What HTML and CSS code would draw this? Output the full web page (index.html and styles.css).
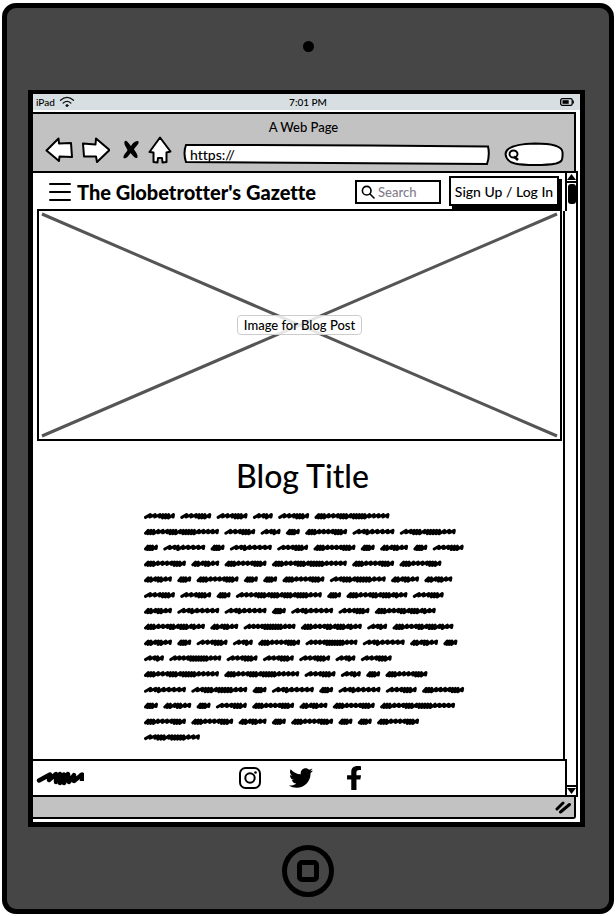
FILE: index.html
```html
<!DOCTYPE html>
<html lang="en">
<head>
<meta charset="utf-8">
<title>The Globetrotter's Gazette</title>
<link rel="stylesheet" href="styles.css">
</head>
<body>
<div class="device">
  <div class="bezel"><span class="camera"></span></div>
  <div class="screen">
    <div class="status">
      <span class="carrier">iPad
        <svg width="16" height="12" viewBox="0 0 16 12" fill="none" stroke="#111" stroke-width="1.3" stroke-linecap="round"><path d="M1.500 4.300Q8-1.500 14.500 4.300M4.200 7Q8 3.800 11.800 7"/><circle cx="8" cy="9.600" r="1" fill="#111" stroke-width="1"/></svg>
      </span>
      <span class="clock">7:01 PM</span>
      <svg class="battery" width="14" height="8" viewBox="0 0 14 8"><rect x=".7" y=".7" width="11.500" height="6.600" rx="1.600" fill="#d7dfe3" stroke="#000" stroke-width="1.300"/><path d="M13.300 2.500v3" stroke="#000" stroke-width="1.200"/><path d="M2.500 2.200h6.200v3.600H2.500z"/></svg>
    </div>
    <header class="chrome">
      <div class="page-name">A Web Page</div>
      <div class="tools">
        <button class="tool" aria-label="Back"><svg width="28" height="26" viewBox="0 0 28 26"><path d="M1.500 13.500 13.500 1.500 14 6.500 26 6 27 20 14.500 19.500 14 24Z"/></svg></button>
        <button class="tool" aria-label="Forward"><svg width="28" height="26" viewBox="0 0 28 26"><path d="M1 6.500 13.500 7.500 14 1.500 27.500 13 15 25 14 19.500 2 19.500Z"/></svg></button>
        <button class="tool tool-stop" aria-label="Stop"><svg width="18" height="20" viewBox="0 0 18 20"><path d="M3 1C5 0 7 4 9 6C11 3 14 0 16.500 1.500C17.500 4 13 7 12 9.500C14 12 16 15 15.500 17.500C13 19.500 10.500 15 8.500 13C7 15.500 4 19.500 1.500 18C1 15 4.500 12.500 5.500 10C4 7 1 3 3 1Z" fill="#000" stroke="none"/></svg></button>
        <button class="tool tool-home" aria-label="Home"><svg width="24" height="28" viewBox="0 0 24 28"><path d="M12 1.500 22.500 15.500 18.500 16.500 18.500 26 14.500 26.500 14 22 10 22 9.500 26.500 5.500 26 5.500 16.500 1.500 16Z"/></svg></button>
        <label class="address">
          <svg class="frame" viewBox="0 0 307 22" preserveAspectRatio="none"><path d="M3 2 Q150 2 305 3.500 Q307 12 304 21 Q150 20 3 19 Q0 10 3 2Z"/></svg>
          <input type="text" value="https://" aria-label="Address">
        </label>
        <label class="find">
          <svg class="frame" viewBox="0 0 60 24" preserveAspectRatio="none"><path d="M1.500 12C2 6 10 2 31 1.500C50 1.500 58 5 58.500 10C59 18 58 20 52 21.500C42 23.500 20 23.500 11 21.500C5 20 2 17 1.500 12Z"/></svg>
          <svg class="lens" width="12" height="12" viewBox="0 0 12 12" fill="none" stroke="#000" stroke-width="2"><ellipse cx="5.500" cy="5" rx="4" ry="3.600"/><path d="M6 7.500 10 11" stroke-width="2.600"/></svg>
          <input type="text" aria-label="Web search">
        </label>
      </div>
    </header>
    <div class="viewport">
      <div class="page">
        <nav class="site-bar">
          <button class="menu" aria-label="Menu"><svg width="22" height="18" viewBox="0 0 22 18" stroke="#000" stroke-width="2" stroke-linecap="round"><path d="M1 1h20M1 9h20M1 17h20"/></svg></button>
          <h1>The Globetrotter's Gazette</h1>
          <label class="search">
            <svg width="14" height="14" viewBox="0 0 14 14" fill="none" stroke="#000" stroke-width="1.600" stroke-linecap="round"><circle cx="5.700" cy="5.700" r="4.300"/><path d="M9 9l4 4"/></svg>
            <input type="search" placeholder="Search" aria-label="Search">
          </label>
          <button class="sign">Sign Up / Log In</button>
        </nav>
        <main>
          <figure>
            <svg viewBox="0 0 521 228" preserveAspectRatio="none" stroke="#555" stroke-width="3"><path d="M3 3 518 225M518 3 3 225"/></svg>
            <figcaption>Image for Blog Post</figcaption>
          </figure>
          <article>
            <h2>Blog Title</h2>
            <svg class="scribble" id="scribble" viewBox="0 0 318 230" role="img" aria-label="Blog text"></svg>
          </article>
        </main>
        <footer>
          <svg class="mark" width="48" height="16" viewBox="0 0 48 16" fill="none" stroke="#000" stroke-width="4.400" stroke-linecap="round" stroke-linejoin="round"><path d="M3 10.500 14 4.500 13 10 20 4 20 12 24 4 24 13 28 4.500 28 13 32 4 33 12 38 5 38 11 46 4.500"/><path d="M46 3v8" stroke-linecap="butt"/></svg>
          <div class="social">
            <a href="#" aria-label="Instagram"><svg width="22" height="22" viewBox="0 0 22 22" fill="none" stroke="#000" stroke-width="2"><rect x="1" y="1" width="20" height="20" rx="5.500"/><circle cx="11" cy="11" r="4.700"/><circle cx="16.500" cy="5.500" r="1.300" fill="#000" stroke="none"/></svg></a>
            <a href="#" aria-label="Twitter"><svg width="24" height="24" viewBox="0 0 512 512"><path d="M459.370 151.716c.325 4.548.325 9.097.325 13.645 0 138.720-105.583 298.558-298.558 298.558-59.452 0-114.680-17.219-161.137-47.106 8.447.974 16.568 1.299 25.340 1.299 49.055 0 94.213-16.568 130.274-44.832-46.132-.975-84.792-31.188-98.112-72.772 6.498.974 12.995 1.624 19.818 1.624 9.421 0 18.843-1.300 27.614-3.573-48.081-9.747-84.143-51.980-84.143-102.985v-1.299c13.969 7.797 30.214 12.670 47.431 13.319-28.264-18.843-46.781-51.005-46.781-87.391 0-19.492 5.197-37.360 14.294-52.954 51.655 63.675 129.300 105.258 216.365 109.807-1.624-7.797-2.599-15.918-2.599-24.040 0-57.828 46.782-104.934 104.934-104.934 30.213 0 57.502 12.670 76.670 33.137 23.715-4.548 46.456-13.320 66.599-25.340-7.798 24.366-24.366 44.833-46.132 57.827 21.117-2.273 41.584-8.122 60.426-16.243-14.292 20.791-32.161 39.308-52.628 54.253z"/></svg></a>
            <a href="#" aria-label="Facebook"><svg width="14" height="24" viewBox="22 0 270 512" preserveAspectRatio="none"><path d="M279.140 288l14.220-92.660h-88.910v-60.130c0-25.350 12.420-50.060 52.240-50.060h40.420V6.260S260.430 0 225.360 0c-73.220 0-121.080 44.380-121.080 124.720v70.620H22.890V288h81.390v224h100.170V288z"/></svg></a>
          </div>
        </footer>
      </div>
      <div class="scrollbar">
        <span class="arrow"><svg width="9" height="6" viewBox="0 0 9 6"><path d="M4.500 0 9 6H0z"/></svg></span>
        <span class="thumb"></span>
        <span class="arrow arrow-down"><svg width="9" height="6" viewBox="0 0 9 6"><path d="M4.500 6 9 0H0z"/></svg></span>
      </div>
    </div>
    <div class="resize"><svg width="18" height="14" viewBox="0 0 18 14" stroke="#000" stroke-width="3" stroke-linecap="round"><path d="M3 9 9 3M6.500 12 15.500 4.500"/></svg></div>
  </div>
  <div class="bezel bezel-home"><button class="home" aria-label="Home button"><span></span></button></div>
</div>
<script src="scribble.js"></script>
</body>
</html>
```
FILE: scribble.js
```js
// Each word is a width and a run of strokes: "w" is a wide stroke, "n" a narrow one.
const words = {
  a: [31, "wwwnnnw"], b: [14, "nnnw"], c: [20, "wwnw"], d: [28, "nnwnnww"],
  e: [42, "nnnwwwwnnnw"], f: [42, "wwnwwwww"], g: [56, "wwnnnwnnnnnwww"],
  h: [75, "nnnwwwnnnwnnnnnwwwww"], i: [86, "wwwwnnnwnnnwnnnwnnnnwww"],
  j: [61, "nnnwwwnnwnnnwnww"], k: [52, "wwwwnnnnnnnwww"]
};
const rows = [
  "aaacah", "hacbefg", "bfbfaebdba", "edehee", "dbebbegdd", "aabibja",
  "dffbfaj", "jdkjcj", "dbacekfdb", "ckaaaca", "hhacbe", "fgbfbfae",
  "bdbaedeh", "eedbebbe", "g"
];

function scribble(x, y, width, strokes) {
  const weight = { w: 5, n: 3 };
  const total = [...strokes].reduce((sum, s) => sum + weight[s], 0);
  const scale = (width - 3) / total;
  let d = `M${x + 1.5} ${y + 1.4}`;
  let px = x + 1.5;
  for (const s of strokes) {
    const step = weight[s] * scale;
    const foot = s === "n" ? 2 : 1;
    d += `L${px + step} ${y - 1.4}L${px + step - 0.4} ${y + foot}`;
    px += step;
  }
  return d;
}

let path = "";
rows.forEach((row, r) => {
  let x = 0;
  for (const key of row) {
    const [width, strokes] = words[key];
    path += scribble(x, 5 + r * 15.8, width, strokes);
    x += width + 5.3;
  }
});
document.getElementById("scribble").innerHTML = `<path d="${path}"/>`;
```
FILE: styles.css
```css
* { box-sizing: border-box; }
body {
  margin: 0;
  min-height: 100vh;
  padding: 3px 2px 2px;
  display: flex;
  background: #fff;
  color: #000;
  font-family: Lato, "Open Sans", sans-serif;
  font-size: 14px;
  font-weight: 500;
  font-variant-ligatures: none;
}
button, input { font: inherit; color: inherit; margin: 0; padding: 0; border: 0; background: none; }
input { min-width: 0; width: 100%; outline: 0; }
svg { display: block; flex: none; }

.device {
  flex: 1;
  display: flex;
  flex-direction: column;
  border: 5px solid #000;
  border-radius: 14px;
  background: #464646;
}
.bezel { height: 82px; display: flex; align-items: center; justify-content: center; }
.bezel-home { padding-top: 6px; }
.camera { width: 11px; height: 11px; margin-bottom: 6px; border-radius: 50%; background: #000; }
.home {
  width: 52px;
  height: 52px;
  display: grid;
  place-items: center;
  border: 5px solid #000;
  border-radius: 50%;
}
.home span { width: 22px; height: 22px; border: 5px solid #000; border-radius: 5px; }

.screen {
  flex: 1;
  display: flex;
  flex-direction: column;
  margin: 0 24px 0 21px;
  border: 5px solid #000;
  border-top-width: 4px;
  background: #fff;
}
.status {
  display: grid;
  grid-template-columns: 1fr auto 1fr;
  align-items: center;
  height: 16px;
  padding: 0 0 0 3px;
  background: #d7dfe3;
  font-size: 10px;
  line-height: 12px;
}
.carrier { display: flex; align-items: center; gap: 4px; }
.battery { justify-self: end; margin-right: 6px; }

.chrome {
  height: 59px;
  margin: 2px 4px 0 0;
  border: solid #000;
  border-width: 2px 2px 0 0;
  background: #c2c2c2;
}
.page-name { padding-top: 4px; text-align: center; font-size: 13px; line-height: 18px; }
.tools { display: flex; align-items: center; height: 28px; padding: 0 10px 0 12px; }
.tool { margin-right: 9px; }
.tool svg { fill: #fff; stroke: #000; stroke-width: 2; stroke-linejoin: round; }
.tool-stop { margin: 0 8px 0 3px; }
.tool-home { margin-right: 11px; }
.address, .find { position: relative; display: flex; align-items: center; margin-top: 8px; }
.address { flex: 1; height: 22px; padding-left: 7px; font-size: 14px; }
.find { width: 60px; height: 24px; margin-left: 14px; padding-left: 18px; }
.address input, .find input { position: relative; }
.frame {
  position: absolute;
  inset: 0;
  width: 100%;
  height: 100%;
  fill: #fff;
  stroke: #000;
  stroke-width: 2;
}
.lens { position: absolute; left: 4px; top: 7px; }

.viewport { flex: 1; display: flex; margin-right: 2px; }
.page { flex: 1; display: flex; flex-direction: column; }
.site-bar {
  height: 40px;
  display: flex;
  align-items: center;
  padding: 0 3px 0 16px;
  border: solid #000;
  border-width: 2px 2px 0 0;
}
.menu { margin-right: 6px; }
h1 { margin: 0; flex: 1; white-space: nowrap; font-size: 20px; line-height: 24px; font-weight: 900; }
.search {
  display: flex;
  align-items: center;
  gap: 3px;
  width: 86px;
  height: 24px;
  padding: 0 4px;
  border: 2px solid #000;
  font-size: 13px;
}
.search input::placeholder { color: #827e8a; opacity: 1; }
.sign {
  width: 110px;
  height: 30px;
  margin: 0 3px 2px 8px;
  border: 2px solid #000;
  background: #fff;
  box-shadow: 3px 3px #000;
  white-space: nowrap;
}

main {
  flex: 1;
  margin-right: 2px;
  padding-right: 1px;
  border-right: 2px solid #000;
}
figure {
  position: relative;
  display: grid;
  place-items: center;
  height: 232px;
  margin: -2px 0 0 4px;
  border: 2px solid #000;
  background: #fff;
}
figure svg { position: absolute; inset: 0; width: 100%; height: 100%; }
figcaption {
  position: relative;
  padding: 0 6px;
  border: 1px solid #ccc;
  border-radius: 4px;
  background: rgba(255, 255, 255, 0.85);
  font-size: 13px;
  line-height: 18px;
}
article {
  display: flex;
  flex-direction: column;
  align-items: center;
  padding: 16px 0 0 10px;
}
h2 { margin: 0 0 16px; font-size: 32px; line-height: 38px; font-weight: 500; }
.scribble {
  width: 318px;
  height: 230px;
  overflow: visible;
  fill: none;
  stroke: #000;
  stroke-width: 3;
  stroke-linecap: round;
  stroke-linejoin: round;
}

footer {
  height: 38px;
  display: grid;
  grid-template-columns: 1fr auto 1fr;
  align-items: center;
  padding: 0 2px 0 3px;
  border: solid #000;
  border-width: 2px 2px 2px 0;
}
.social { display: flex; align-items: center; gap: 28px; }
.social a { color: inherit; }
.social a:last-child { margin-left: 6px; }

.scrollbar {
  width: 11px;
  display: flex;
  flex-direction: column;
  align-items: center;
  border: solid #000;
  border-width: 2px 2px 2px 0;
}
.arrow {
  align-self: stretch;
  height: 10px;
  display: grid;
  place-items: center;
  border-bottom: 2px solid #000;
}
.arrow-down { margin-top: auto; border-bottom: 0; border-top: 2px solid #000; }
.thumb { width: 8px; height: 20px; margin-top: 1px; border-radius: 3px; background: #000; }

.resize {
  height: 22px;
  display: flex;
  align-items: center;
  justify-content: flex-end;
  margin: 0 4px 3px 0;
  padding-right: 2px;
  border: solid #000;
  border-width: 0 2px 2px 0;
  border-bottom-right-radius: 3px;
  background: #c2c2c2;
}
```
